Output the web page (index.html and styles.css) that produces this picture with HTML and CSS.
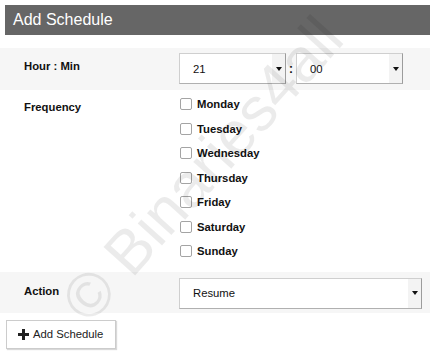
FILE: index.html
```html
<!DOCTYPE html>
<html>
<head>
  <title>Add Schedule</title>
  <link rel="stylesheet" href="styles.css">
</head>
<body>
  <div class="panel">
    <div class="panel-title">Add Schedule</div>

    <div class="form-row shaded">
      <div class="form-label">Hour : Min</div>
      <div class="form-field time">
        <div class="select small">
          <span class="select-value">21</span>
          <span class="select-btn"><i class="caret"></i></span>
        </div>
        <span class="colon">:</span>
        <div class="select small">
          <span class="select-value">00</span>
          <span class="select-btn"><i class="caret"></i></span>
        </div>
      </div>
    </div>

    <div class="form-row days-row">
      <div class="form-label">Frequency</div>
      <div class="form-field days">
        <label class="day"><input type="checkbox"> Monday</label>
        <label class="day"><input type="checkbox"> Tuesday</label>
        <label class="day"><input type="checkbox"> Wednesday</label>
        <label class="day"><input type="checkbox"> Thursday</label>
        <label class="day"><input type="checkbox"> Friday</label>
        <label class="day"><input type="checkbox"> Saturday</label>
        <label class="day"><input type="checkbox"> Sunday</label>
      </div>
    </div>

    <div class="form-row shaded action-row">
      <div class="form-label">Action</div>
      <div class="form-field">
        <div class="select wide">
          <span class="select-value">Resume</span>
          <span class="select-btn"><i class="caret"></i></span>
        </div>
      </div>
    </div>

    <button type="button" class="btn">
      <svg width="11" height="11" viewBox="0 0 11 11"><rect x="4" y="0" width="3" height="11" fill="#222"/><rect x="0" y="4" width="11" height="3" fill="#222"/></svg>
      Add Schedule
    </button>

    <span class="watermark">© Binaries4all</span>
  </div>
</body>
</html>
```

FILE: styles.css
```css
body {
  font-family: "Liberation Sans", Arial, sans-serif;
  margin: 0;
  padding: 0;
  background: #fff;
  color: #111;
}

.panel {
  position: relative;
  width: 430px;
  height: 356px;
  overflow: hidden;
}

.panel-title {
  margin: 5px 0 0 5px;
  height: 30px;
  line-height: 30px;
  padding-left: 8px;
  background-color: #666;
  color: #fff;
  font-size: 16px;
}

.form-row {
  display: grid;
  grid-template-columns: 179px 1fr;
  padding: 5px 8px 6px 0;
}

.form-row.shaded {
  background-color: #f6f6f6;
}

.panel-title + .form-row {
  margin-top: 13px;
}

.form-label {
  padding: 6px 0 0 24px;
  font-size: 11.3px;
  font-weight: bold;
  line-height: 15px;
}

.form-field.time {
  display: flex;
  align-items: center;
}

.select {
  display: flex;
  height: 31px;
  box-sizing: border-box;
  border: 1px solid #cfcfcf;
  border-right-color: #9c9c9c;
  border-bottom-color: #b0b0b0;
  background: #fff;
  font-size: 11.3px;
}

.select.small {
  width: 107px;
}

.select.wide {
  width: 243px;
}

.select-value {
  flex: 1;
  display: flex;
  align-items: center;
  padding-left: 13px;
}

.select-btn {
  width: 13px;
  display: flex;
  align-items: center;
  justify-content: center;
  background-color: #f3f3f3;
}

.caret {
  width: 0;
  height: 0;
  border-left: 3px solid transparent;
  border-right: 3px solid transparent;
  border-top: 4px solid #111;
}

.colon {
  width: 10px;
  text-align: center;
  font-weight: bold;
  font-size: 12px;
}

.days-row {
  padding: 2px 8px 8px 0;
}

.days-row .form-label {
  padding-top: 8px;
}

.days {
  display: flex;
  flex-direction: column;
}

.day {
  display: flex;
  align-items: center;
  height: 24.5px;
  font-size: 11.3px;
  font-weight: bold;
}

.day input {
  -webkit-appearance: none;
  appearance: none;
  width: 12px;
  height: 12px;
  margin: 0 5px 0 1px;
  border: 1px solid #a4a4a4;
  border-radius: 2px;
  background: #fff;
}

.action-row {
  padding: 6px 8px 4px 0;
}

.btn {
  display: flex;
  align-items: center;
  gap: 4px;
  margin: 7px 0 0 6px;
  height: 29px;
  padding: 0 12px 0 11px;
  border: 1px solid #ccc;
  background: #fff;
  box-shadow: 1px 1px 1px rgba(0, 0, 0, 0.15);
  font-family: "Liberation Sans", Arial, sans-serif;
  font-size: 11.3px;
  color: #222;
}

/* watermark over the screenshot */
.watermark {
  position: absolute;
  left: 74px;
  top: 282px;
  line-height: 60px;
  font-size: 62px;
  white-space: nowrap;
  color: rgba(0, 0, 0, 0.08);
  transform: rotate(-48deg);
  transform-origin: left center;
  pointer-events: none;
}
```
